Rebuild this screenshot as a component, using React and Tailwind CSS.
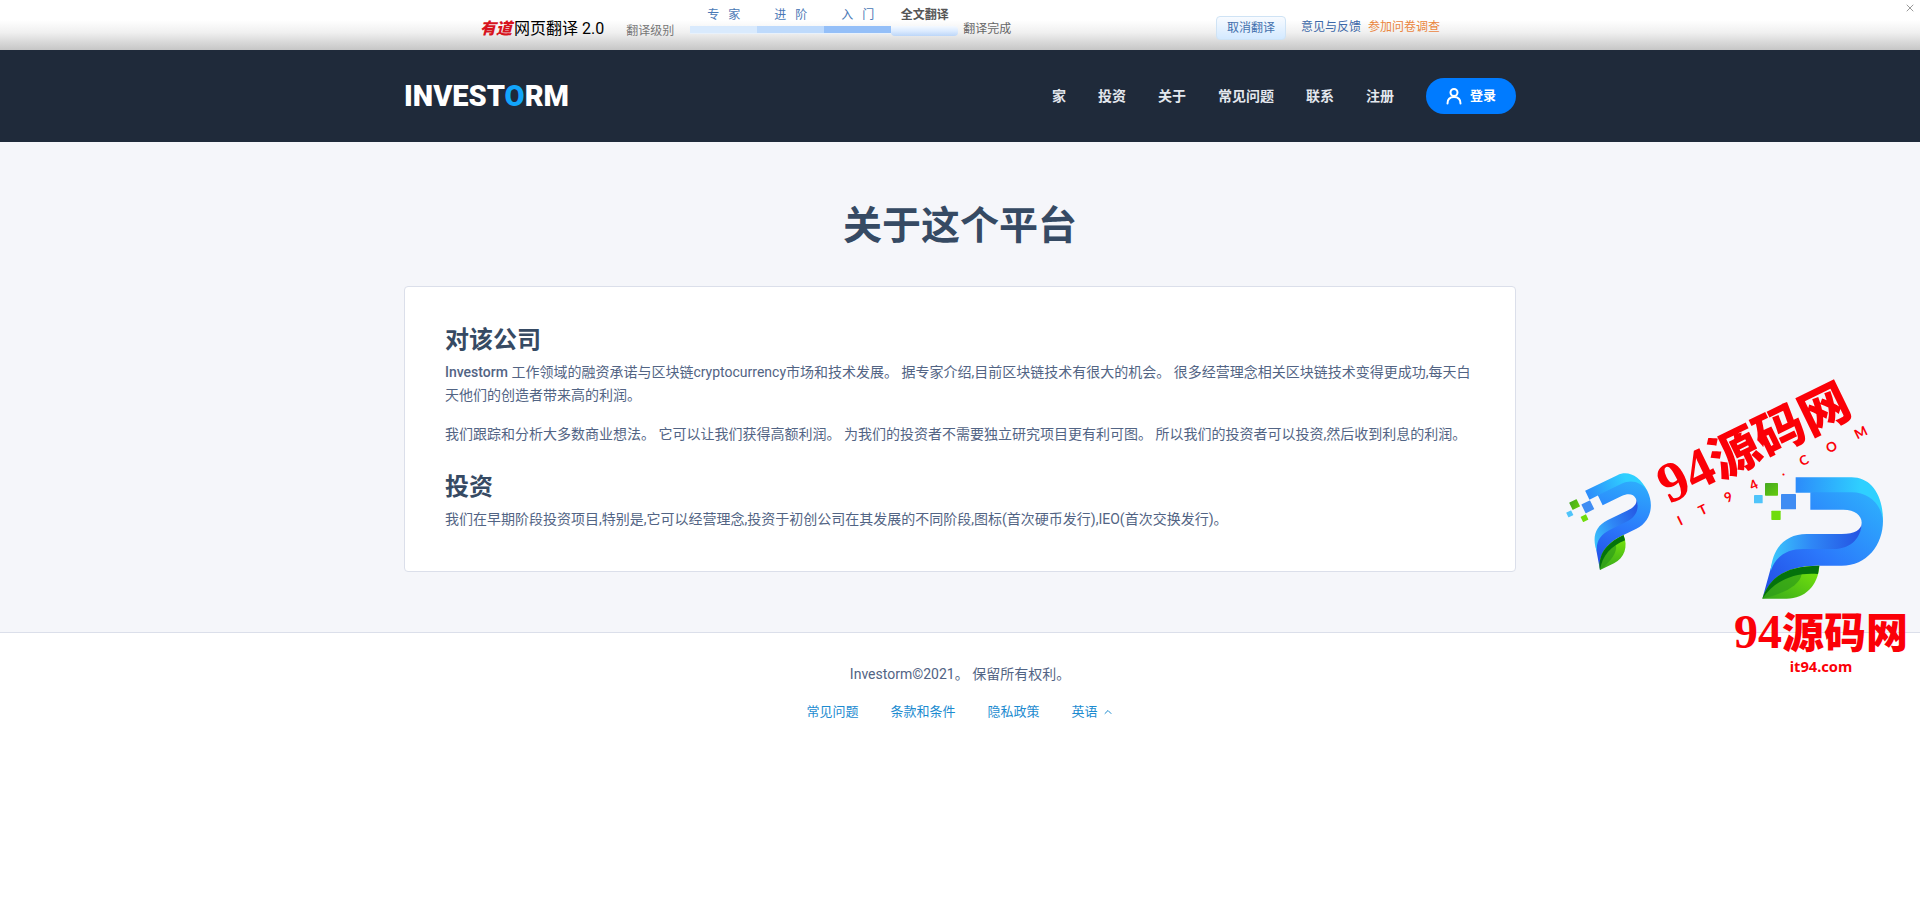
import React, { useState } from 'react';
import { ChevronUp, X } from 'lucide-react';

const levels = [
  { name: '专 家', bar: 'h-2 border-b border-[#e8f1fb] bg-[#d9eafd]', text: 'text-[#4a78b5]' },
  { name: '进 阶', bar: 'h-2 border-b border-[#e8f1fb] bg-[#bedafc]', text: 'text-[#4a78b5]' },
  { name: '入 门', bar: 'h-2 border-b border-[#e8f1fb] bg-[#94bff8]', text: 'text-[#4a78b5]' },
  { name: '全文翻译', bar: 'h-[10px] rounded-sm bg-linear-to-b from-[#f4f9ff] via-[#dcebff] to-[#bcd6f8]', text: 'font-bold text-[#555]' },
];

const navLinks = ['家', '投资', '关于', '常见问题', '联系', '注册'];

const footerLinks = ['常见问题', '条款和条件', '隐私政策'];

const TranslateBar = ({ onClose }) => (
  <div className="relative h-[50px] bg-linear-to-b from-white from-40% via-[#f0f0f0] via-65% to-[#c6c6c6] text-xs leading-4 font-[Roboto,'Noto_Sans_CJK_SC',sans-serif]">
    <div className="mx-auto flex h-full max-w-[960px] items-start">
      <div className="flex items-center pt-[17px] text-base leading-6 text-black">
        <span className="mr-[2px] font-black italic text-[#d7141e]">有道</span>
        <span>网页翻译 2.0</span>
      </div>
      <span className="ml-[22px] pt-[23px] text-[#777]">翻译级别</span>

      {/* Level picker */}
      <div className="ml-4 flex items-start pt-[7px]">
        {levels.map((level) => (
          <button key={level.name} type="button" className={`w-[67px] ${level.text}`}>
            <span className="block whitespace-pre">{level.name.replace(' ', '   ')}</span>
            <span className={`mt-[3px] block ${level.bar}`} />
          </button>
        ))}
      </div>
      <span className="ml-[5px] pt-[21px] text-[#666]">翻译完成</span>

      <div className="ml-auto flex items-start pt-4">
        <button type="button" className="h-6 w-[70px] rounded-sm border border-[#cfe3f5] bg-linear-to-b from-[#f8fbff] to-[#d3e9ff] text-[#4370ad]">
          取消翻译
        </button>
        <a href="#feedback" className="ml-[15px] pt-[3px] text-[#3d68a8]">意见与反馈</a>
        <a href="#survey" className="ml-[7px] pt-[3px] text-[#ea8640]">参加问卷调查</a>
      </div>
    </div>
    <button type="button" aria-label="关闭" onClick={onClose} className="absolute top-[2px] right-1 text-[#999]">
      <X size={12} />
    </button>
  </div>
);

const Header = () => (
  <header className="bg-[#1f2a3a]">
    <div className="mx-auto flex h-[92px] max-w-[1112px] items-center justify-between">
      <a href="#home" className="font-[Roboto,sans-serif] text-[29px] leading-10 font-black text-white">
        INVEST<span className="text-[#12a5fb]">O</span>RM
      </a>
      <nav className="flex items-center gap-8 text-sm font-bold text-[#e3e7ee]">
        {navLinks.map((link) => (
          <a key={link} href="#nav">{link}</a>
        ))}
        <a href="#login" className="flex h-9 items-center gap-2 rounded-full bg-[#007bff] px-5 text-[13px] text-white">
          <svg width="16" height="18" viewBox="0 0 16 18" fill="none" stroke="currentColor" strokeWidth="2" strokeLinecap="round">
            <circle cx="8" cy="5.5" r="3.5" />
            <path d="M1.5 16.5C1.5 12 4.5 10 8 10s6.500 2 6.500 6.500" />
          </svg>
          登录
        </a>
      </nav>
    </div>
  </header>
);

const LogoMark = () => (
  <g>
    <rect x="675" y="369" width="39" height="38" rx="2" fill="url(#square)" />
    <rect x="642" y="405" width="26" height="25" rx="2" fill="#4fc4fa" />
    <rect x="723" y="402" width="45" height="46" rx="2" fill="#3f8cf3" />
    <rect x="694" y="452" width="28" height="28" rx="2" fill="#6fdc0c" />
    <path d="M767 352H935C990 352 1029 400 1029 482L1000 440L940 410L811 398H767Z" fill="url(#top)" />
    <path d="M811 397V449H910C945 449 965 466 965 488C965 525 930 560 880 560H790C735 560 700 590 693 622L667 716C690 655 740 617 830 617H905C980 617 1029 555 1029 482C1023 430 985 397 935 397Z" fill="url(#front)" />
    <path d="M692 634C697 565 735 522 800 522H905C945 522 965 508 965 488C965 530 935 567 880 567H790C740 567 705 590 692 634Z" fill="url(#fold)" />
    <path d="M667 716C690 650 740 617 838 617C835 675 795 716 740 716Z" fill="url(#leaf)" />
    <path d="M667 716C700 670 730 642 785 642C780 675 735 700 667 716Z" fill="#2b9a18" opacity="0.65" />
    <path d="M667 716C690 650 740 617 838 617L834 642C765 636 705 660 667 716Z" fill="#04720c" />
  </g>
);

const Watermark = () => (
  <svg className="pointer-events-none absolute top-[360px] right-0" width="380" height="330" viewBox="0 0 1140 990" fill="#fb0007">
    <defs>
      <linearGradient id="top"><stop stopColor="#2c8bfa" /><stop offset="0.75" stopColor="#2fd0ff" /></linearGradient>
      <linearGradient id="front" x1="0" y1="1" x2="1" y2="0"><stop stopColor="#2249e4" /><stop offset="0.45" stopColor="#2b78fb" /><stop offset="1" stopColor="#2eb4fd" /></linearGradient>
      <linearGradient id="fold"><stop stopColor="#3bc8fc" /><stop offset="0.45" stopColor="#2f87f6" /><stop offset="1" stopColor="#2452e2" /></linearGradient>
      <linearGradient id="leaf" x1="0" y1="1" x2="1" y2="0"><stop stopColor="#35a81a" /><stop offset="1" stopColor="#7be80c" /></linearGradient>
      <linearGradient id="square" x1="0" y1="0" x2="1" y2="1"><stop stopColor="#45a822" /><stop offset="1" stopColor="#64cc0c" /></linearGradient>
    </defs>

    <g transform="translate(180 630) rotate(-26) scale(0.64) translate(-667 -716)">
      <LogoMark />
    </g>
    <g transform="translate(387 433) rotate(-26)" className="font-['Liberation_Serif','Noto_Sans_CJK_SC',serif] font-black">
      <text fontSize="170">94<tspan fontSize="150">源码网</tspan></text>
    </g>
    <g transform="translate(426 495) rotate(-26)" className="font-[Lato,sans-serif] font-bold">
      <text x="0 76 162 246 340 414 506 604" fontSize="40" textAnchor="middle">IT94.COM</text>
    </g>

    <LogoMark />
    <text x="582" y="865" fontSize="144" className="font-['Liberation_Serif','Noto_Sans_CJK_SC',serif] font-black">
      94<tspan fontSize="126">源码网</tspan>
    </text>
    <text x="843" y="936" fontSize="44" textAnchor="middle" className="font-['Noto_Sans',sans-serif] font-bold">it94.com</text>
  </svg>
);

const App = () => {
  const [showBar, setShowBar] = useState(true);

  return (
    <div className="relative min-h-screen overflow-x-hidden bg-white font-[Roboto,'Noto_Sans_CJK_SC',sans-serif] text-sm text-[#526484]" lang="zh-CN">
      {showBar && <TranslateBar onClose={() => setShowBar(false)} />}
      <Header />

      {/* Content */}
      <main className="bg-[#f5f6fa] pt-[58px] pb-15">
        <div className="mx-auto max-w-[1112px]">
          <h1 className="mb-[34px] text-center text-[39px] leading-[52px] font-bold text-[#364a63]">关于这个平台</h1>
          <article className="rounded-sm border border-[#dbdfea] bg-white p-10 leading-[23px]">
            <h2 className="mb-2 text-2xl leading-[26px] font-bold text-[#364a63]">对该公司</h2>
            <p className="mb-4">
              <strong className="font-medium">Investorm</strong> 工作领域的融资承诺与区块链cryptocurrency市场和技术发展。 据专家介绍,目前区块链技术有很大的机会。 很多经营理念相关区块链技术变得更成功,每天白天他们的创造者带来高的利润。
            </p>
            <p className="mb-7">
              我们跟踪和分析大多数商业想法。 它可以让我们获得高额利润。 为我们的投资者不需要独立研究项目更有利可图。 所以我们的投资者可以投资,然后收到利息的利润。
            </p>
            <h2 className="mb-2 text-2xl leading-[26px] font-bold text-[#364a63]">投资</h2>
            <p>我们在早期阶段投资项目,特别是,它可以经营理念,投资于初创公司在其发展的不同阶段,图标(首次硬币发行),IEO(首次交换发行)。</p>
          </article>
        </div>
      </main>

      <footer className="flex flex-col items-center gap-4 border-t border-[#dbdfea] pt-[30px]">
        <p className="leading-[22px]">Investorm©2021。 保留所有权利。</p>
        <div className="flex items-center gap-8 text-[13px] leading-[22px] text-[#1c8bd0]">
          {footerLinks.map((link) => (
            <a key={link} href="#footer">{link}</a>
          ))}
          <button type="button" className="flex items-center gap-1">
            英语 <ChevronUp size={12} />
          </button>
        </div>
      </footer>

      <Watermark />
    </div>
  );
};

export default App;
